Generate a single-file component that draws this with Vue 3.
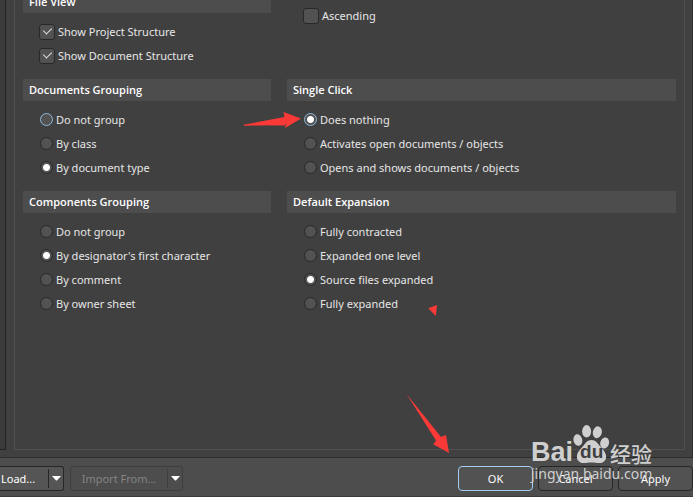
<script setup>
import { reactive } from 'vue'

const checks = reactive({ project: true, document: true, ascending: false })

const groups = reactive([
  {
    id: 'documents', title: 'Documents Grouping', value: 2, focus: 0,
    options: ['Do not group', 'By class', 'By document type'],
  },
  {
    id: 'click', title: 'Single Click', value: 0, focus: 0,
    options: ['Does nothing', 'Activates open documents / objects', 'Opens and shows documents / objects'],
  },
  {
    id: 'components', title: 'Components Grouping', value: 1, focus: -1,
    options: ['Do not group', "By designator's first character", 'By comment', 'By owner sheet'],
  },
  {
    id: 'expansion', title: 'Default Expansion', value: 2, focus: -1,
    options: ['Fully contracted', 'Expanded one level', 'Source files expanded', 'Fully expanded'],
  },
])
</script>

<template>
  <div class="dialog">
    <div class="body">
      <div class="tree"></div>
      <main class="panel">
        <div class="grid">
          <section>
            <h2>File View</h2>
            <div class="rows">
              <label class="row"><input v-model="checks.project" type="checkbox" />Show Project Structure</label>
              <label class="row"><input v-model="checks.document" type="checkbox" />Show Document Structure</label>
            </div>
          </section>
          <section class="sort">
            <label class="row"><input v-model="checks.ascending" type="checkbox" />Ascending</label>
          </section>
          <section v-for="g in groups" :key="g.id">
            <h2>{{ g.title }}</h2>
            <div class="rows">
              <label v-for="(o, i) in g.options" :key="o" class="row">
                <input v-model="g.value" type="radio" :name="g.id" :value="i" :class="{ focus: g.focus === i }" />{{ o }}
              </label>
            </div>
          </section>
        </div>
      </main>
    </div>

    <footer>
      <div class="split load">
        <button type="button" class="main">Load...</button>
        <button type="button" class="drop" aria-label="Load options">
          <svg width="9" height="5" viewBox="0 0 9 5"><path d="M0 0H9L5 4.5H4Z" fill="#fff" /></svg>
        </button>
      </div>
      <div class="split off">
        <button type="button" class="main" disabled>Import From...</button>
        <button type="button" class="drop" aria-label="Import options">
          <svg width="9" height="5" viewBox="0 0 9 5"><path d="M0 0H9L5 4.5H4Z" fill="#fff" /></svg>
        </button>
      </div>
      <div class="actions">
        <button type="button" class="btn primary">OK</button>
        <button type="button" class="btn">Cancel</button>
        <button type="button" class="btn">Apply</button>
      </div>
    </footer>

    <svg class="marks" width="460" height="460" viewBox="0 0 460 460" aria-hidden="true">
      <g fill="#fb3a37">
        <path d="M243.5 124.8L284.5 117L283.5 112L301 118.4L285 128L286 124.3L244 125.8Z" />
        <path d="M243.5 125.2L285 125.5L285 118Z" />
        <path d="M406.5 394L441 437L446 435L449 453L433.3 444.2L436 440.5Z" />
        <path d="M428.3 308.3L437 305L435.8 316Z" />
      </g>
    </svg>

    <div class="watermark">
      <div class="brand">
        <span class="bai">Bai</span>
        <span class="paw">
          <svg width="37" height="42" viewBox="0 0 38 42" aria-hidden="true">
            <g fill="#cfcfcf">
              <ellipse cx="5" cy="18" rx="4.5" ry="6" transform="rotate(-12 5 18)" />
              <ellipse cx="14" cy="9" rx="4.6" ry="6.4" />
              <ellipse cx="25" cy="10" rx="4.6" ry="6.2" transform="rotate(12 25 10)" />
              <ellipse cx="32.5" cy="21" rx="4.5" ry="5.8" transform="rotate(14 32.5 21)" />
              <path d="M19 18C23 18 25 21 27.5 24C30 27 34 30 34 35C34 39 31 41.5 27 41.5C24 41.5 22 41 19 41C16 41 14 41.5 11 41.5C7 41.5 4 39 4 35C4 30 8 27 10.5 24C13 21 15 18 19 18Z" />
            </g>
          </svg>
          <span class="du">du</span>
        </span>
        <span class="cn">经验</span>
      </div>
      <div class="site">jingyan.baidu.com</div>
    </div>
  </div>
</template>

<style>
body {
  margin: 0;
  background: #404040;
}
</style>

<style scoped>
.dialog {
  position: relative;
  display: flex;
  flex-direction: column;
  box-sizing: border-box;
  min-height: 100vh;
  overflow: hidden;
  background: #404040;
  color: #e6e6e6;
  font: 11px/24px "Noto Sans", "Open Sans", sans-serif;
}
.body {
  flex: 1;
  display: flex;
  gap: 8px;
  padding: 0 7px 7px 0;
  border-right: 1px solid #2c2c2c;
}
.tree {
  width: 5px;
  background: #3b3b3b;
  border: solid #242424;
  border-width: 0 1px 1px 0;
}
.panel {
  flex: 1;
  overflow: hidden;
  border: 1px solid #505050;
  border-top: 0;
}
.grid {
  display: grid;
  grid-template-columns: 248px 1fr;
  gap: 11px 16px;
  margin-top: -9px;
  padding: 0 8px;
}
h2 {
  margin: 0;
  padding: 0 6px;
  background: #4d4d4d;
  color: #fff;
  font: 600 11px/22px "Open Sans", "Noto Sans", sans-serif;
}
.rows {
  padding: 7px 0 0 16px;
}
.sort {
  padding: 13px 0 0 16px;
}
.row {
  display: flex;
  align-items: center;
  height: 24px;
}
input {
  appearance: none;
  box-sizing: border-box;
  flex: none;
  margin: 0 3px 1px 0;
  background: #525252;
  border: 1px solid #282828;
}
input[type="checkbox"] {
  display: grid;
  place-items: center;
  width: 16px;
  height: 16px;
  border-radius: 3px;
}
input[type="checkbox"]:checked::after {
  content: "";
  width: 4px;
  height: 7px;
  margin-top: -3px;
  border: solid #e6e6e6;
  border-width: 0 1px 1px 0;
  transform: rotate(45deg);
}
input[type="radio"] {
  width: 13px;
  height: 13px;
  margin-left: 1px;
  border-radius: 50%;
}
input[type="radio"]:checked {
  background: radial-gradient(circle, #fff 3px, #525252 4px);
}
input[type="radio"].focus {
  border-color: #8fb8dc;
}
footer {
  display: flex;
  align-items: flex-start;
  gap: 6px;
  box-sizing: border-box;
  height: 40px;
  padding-top: 8px;
  background: #4d4d4d;
  border-top: 1px solid #2c2c2c;
  border-bottom: 1px solid #3a3a3a;
}
button {
  box-sizing: border-box;
  padding: 0;
  border: 0;
  background: none;
  color: #fff;
  font: 11px/23px "Noto Sans", "Open Sans", sans-serif;
  white-space: nowrap;
}
.split {
  display: flex;
  box-sizing: border-box;
  height: 25px;
  border: 1px solid #262626;
  border-radius: 3px;
  background: #555;
}
.split .main {
  flex: 1;
}
.split .drop {
  display: grid;
  place-items: center;
  width: 15px;
  margin: 2px 0;
  border-left: 1px solid #262626;
}
.load {
  width: 64px;
  border-left: 0;
  border-radius: 0 3px 3px 0;
}
.load .main {
  padding-left: 1px;
  text-align: left;
}
.off {
  width: 113px;
  border-color: #3e3e3e;
  background: #4d4d4d;
}
.off .main {
  color: #848484;
}
.off .drop {
  border-color: #3e3e3e;
}
.actions {
  display: flex;
  gap: 5px;
  margin-left: auto;
}
.btn {
  width: 75px;
  height: 25px;
  border: 1px solid #262626;
  border-radius: 4px;
  background: #525252;
}
.primary {
  border-color: #a3cdf5;
}
.marks {
  position: absolute;
  top: 0;
  left: 0;
  pointer-events: none;
}
.watermark {
  position: absolute;
  right: 34px;
  bottom: 14px;
  width: 128px;
  color: #cfcfcf;
  pointer-events: none;
}
.brand {
  display: flex;
  align-items: flex-end;
  height: 42px;
}
.bai {
  font: 700 27px/24px "Liberation Sans", sans-serif;
}
.paw {
  position: relative;
  width: 37px;
  height: 42px;
}
.paw svg {
  display: block;
}
.du {
  position: absolute;
  left: 7px;
  bottom: 2px;
  color: #404040;
  font: 700 19px/20px "Liberation Sans", sans-serif;
}
.cn {
  font: 500 21px/22px "Noto Sans CJK SC", sans-serif;
}
.site {
  font: 14px/19px "Noto Sans", sans-serif;
}
</style>
